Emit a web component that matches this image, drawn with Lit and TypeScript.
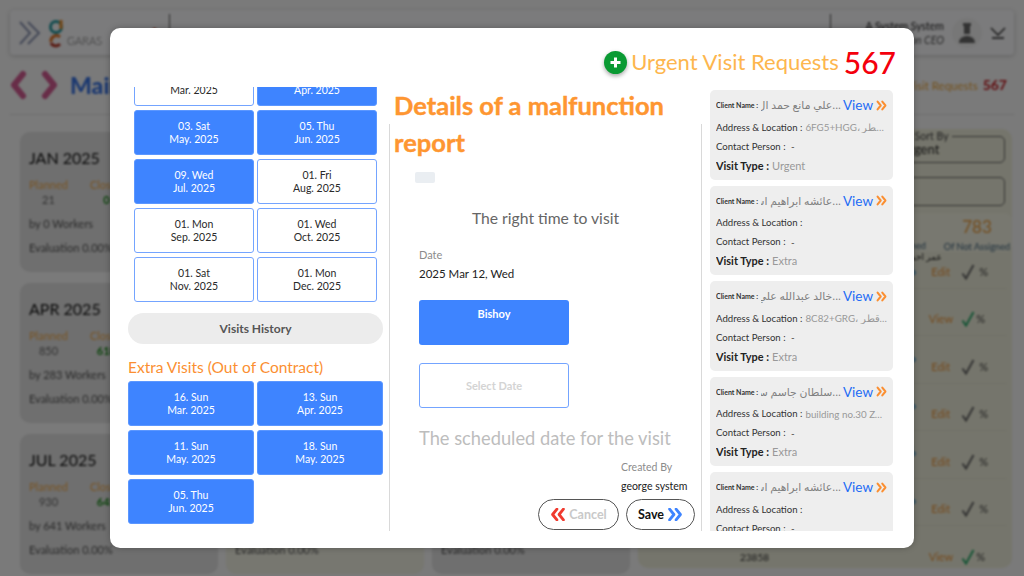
import { LitElement, html, css, svg } from "lit";
import { customElement } from "lit/decorators.js";

const chev = (c: string, left = false) => html`<svg class="chev" viewBox="0 0 14 12" style="color:${c}">
  ${left
    ? svg`<path d="M6 1 2 6l4 5M12 1 8 6l4 5" fill="none" stroke="currentColor" stroke-width="2.6" stroke-linejoin="round" stroke-linecap="round"/>`
    : svg`<path d="M2 1l4 5-4 5M8 1l4 5-4 5" fill="none" stroke="currentColor" stroke-width="2.6" stroke-linejoin="round" stroke-linecap="round"/>`}
</svg>`;

const check = (c: string) => html`<svg class="check" viewBox="0 0 14 16"><path d="M1.5 9.5l3.5 5L12.5 1" fill="none" stroke="${c}" stroke-width="2"/></svg>`;

const months1 = [
  { d: "", m: "Mar. 2025", on: false },
  { d: "", m: "Apr. 2025", on: true },
  { d: "03. Sat", m: "May. 2025", on: true },
  { d: "05. Thu", m: "Jun. 2025", on: true },
  { d: "09. Wed", m: "Jul. 2025", on: true },
  { d: "01. Fri", m: "Aug. 2025", on: false },
  { d: "01. Mon", m: "Sep. 2025", on: false },
  { d: "01. Wed", m: "Oct. 2025", on: false },
  { d: "01. Sat", m: "Nov. 2025", on: false },
  { d: "01. Mon", m: "Dec. 2025", on: false },
];
const extras = [
  { d: "16. Sun", m: "Mar. 2025" },
  { d: "13. Sun", m: "Apr. 2025" },
  { d: "11. Sun", m: "May. 2025" },
  { d: "18. Sun", m: "May. 2025" },
  { d: "05. Thu", m: "Jun. 2025" },
];
const visits = [
  { n: "...علي مانع حمد ال", a: "6FG5+HGG، الدوحة، قطر", t: "Urgent" },
  { n: "...عائشه ابراهيم اس", a: "", t: "Extra" },
  { n: "...خالد عبدالله علي", a: "8C82+GRG، الريان، قطر", t: "Extra" },
  { n: "...سلطان جاسم سا", a: "building no.30 Zone 51 street", t: "Extra" },
  { n: "...عائشه ابراهيم اس", a: "", t: "Extra" },
];
const bgCards = [
  { t: "JAN 2025", p: "21", c: "0", w: "0", y: false },
  { t: "FEB 2025", p: "840", c: "600", w: "280", y: true },
  { t: "MAR 2025", p: "900", c: "620", w: "300", y: false },
  { t: "APR 2025", p: "850", c: "618", w: "283", y: false },
  { t: "MAY 2025", p: "880", c: "630", w: "290", y: true },
  { t: "JUN 2025", p: "910", c: "635", w: "310", y: false },
  { t: "JUL 2025", p: "930", c: "641", w: "641", y: false },
  { t: "AUG 2025", p: "920", c: "640", w: "320", y: true },
  { t: "SEP 2025", p: "890", c: "625", w: "305", y: false },
];
const rows = [false, true, false, false, false, false, true];

@customElement("app-root")
export class AppRoot extends LitElement {
  static styles = css`
    :host { display: block; width: 1024px; height: 576px; overflow: hidden; position: relative; font-family: "Lato", "Noto Sans", "Noto Sans CJK SC", sans-serif; background: #f4f4f4; }
    * { box-sizing: border-box; }

    /* dimmed page */
    .page { width: 1024px; height: 576px; background: #f4f4f4; padding: 10px 10px 0; filter: blur(1px); display: flex; flex-direction: column; overflow: hidden; }
    .topbar { height: 45px; flex: none; display: flex; align-items: center; background: #f6f6f8; border-radius: 4px; box-shadow: 0 1px 4px rgba(0,0,0,.2); padding: 0 8px; }
    .tb-left { width: 152px; display: flex; align-items: center; gap: 6px; border-right: 1px solid #555; height: 38px; }
    .logo { display: flex; align-items: flex-end; gap: 1px; }
    .garas { font-size: 11px; font-weight: 300; color: #666; line-height: 14px; }
    .dot { margin-left: auto; margin-right: 13px; width: 3px; height: 10px; background: #c8401e; }
    .tb-fill { flex: 1; }
    .tb-right { width: 176px; border-left: 1px solid #555; height: 38px; display: flex; align-items: center; justify-content: flex-end; gap: 8px; }
    .who { text-align: right; font-size: 10.5px; line-height: 14px; color: #222; }
    .who i { color: #555; display: block; }
    .avatar { width: 30px; height: 30px; border-radius: 50%; background: #eee; display: flex; align-items: center; justify-content: center; }

    .titlebar { display: flex; align-items: center; height: 60px; flex: none; border-bottom: 1px solid #ddd; }
    .mai { font-size: 23px; font-weight: 900; color: #3a73e0; margin-left: 12px; }
    .tb-space { flex: 1; }
    .urgent-bg { font-size: 11.5px; color: #e8a33a; margin-right: 7px; white-space: nowrap; }
    .urgent-bg b { font-size: 14px; color: #c0161c; font-weight: 700; margin-left: 2px; }

    .main { flex: 1; display: flex; gap: 8px; padding-top: 17px; min-height: 0; padding-left: 10px; }
    .cols { flex: none; width: 610px; display: grid; grid-template-columns: repeat(3, 198px); grid-auto-rows: 140px; gap: 11px 8px; }
    .mcard { background: #dedede; border-radius: 10px; padding: 16px 9px 0; overflow: hidden; }
    .mcard.y { background: #eeeee0; }
    .mcard h3 { margin: 0 0 9px; font-size: 16px; font-weight: 400; color: #111; line-height: 20px; }
    .stats { display: flex; gap: 22px; font-size: 11px; line-height: 15px; text-align: center; }
    .stats .pl { color: #f0a848; }
    .stats .v { color: #666; }
    .stats .g { color: #1b8a1b; font-weight: 700; }
    .mcard p { margin: 10px 0 0; font-size: 11px; line-height: 14px; color: #555; }

    .side { width: 374px; height: 439px; flex: none; margin-top: -3px; background: #ebebd8; border-radius: 10px; padding: 3px 7px 0 12px; display: flex; flex-direction: column; }
    fieldset { margin: 0; padding: 0 0 0 249px; height: 31px; border: 1px solid #666; border-radius: 5px; flex: none; font-size: 13px; line-height: 18px; color: #222; }
    fieldset.e { margin-top: 14px; height: 29px; }
    legend { margin-left: -3px; padding: 0 3px; font-size: 10.5px; line-height: 8px; color: #444; white-space: nowrap; }
    .sbox { flex: none; height: 39px; margin: 7px -7px 0 0; padding-right: 7px; display: flex; justify-content: flex-end; background: #f0f0e0; border-radius: 8px; }
    .sc { display: flex; flex-direction: column; align-items: center; }
    .sc.a { width: 40px; align-items: flex-end; margin-right: 23px; padding-top: 27px; font-size: 9.2px; line-height: 12px; color: #3d6079; }
    .sc.b { width: 56px; }
    .sc b { font-size: 17px; font-weight: 400; line-height: 28px; color: #e89a3a; }
    .sc span { font-size: 9.2px; line-height: 11px; color: #3d6079; white-space: nowrap; }
    .arab { flex: none; height: 5px; font-size: 9px; line-height: 10px; color: #222; padding-left: 256px; white-space: nowrap; font-family: "Noto Sans", "DejaVu Sans", sans-serif; }
    .trow { flex: none; height: 47.4px; display: flex; align-items: flex-end; justify-content: flex-end; gap: 11px; padding: 0 19px 8px 0; border-bottom: 1px solid #e0e0d0; font-size: 11px; line-height: 16px; margin-right: -2px; }
    .trow.first { height: 32px; }
    .trow.last { border-bottom: 0; }
    .trow.vw { padding-right: 22px; gap: 8px; }
    .trow .edit { color: #e8943a; }
    .trow .pct { font-size: 11px; color: #444; margin-left: -7px; }
    .trow .ids { margin-right: auto; margin-left: 90px; font-size: 10px; color: #333; }
    .peo { width: 5px; height: 12px; margin-right: 4px; align-self: center; }
    .check { width: 14px; height: 16px; flex: none; }

    /* overlay */
    .scrim { position: absolute; inset: 0; background: rgba(0,0,0,.5); }
    .modal { position: absolute; left: 110px; top: 28px; width: 804px; height: 520px; background: #fff; border-radius: 10px; box-shadow: 0 0 6px rgba(0,0,0,.25); display: flex; flex-direction: column; overflow: hidden; }
    .mhead { flex: none; height: 59px; display: flex; align-items: center; justify-content: flex-end; padding: 9px 18px 0 0; }
    .plus { width: 23px; height: 23px; border-radius: 50%; background: #0a9a33; box-shadow: 0 2px 4px rgba(0,0,0,.35); display: flex; align-items: center; justify-content: center; margin-right: 4px; }
    .mhead .ttl { font-size: 22px; color: #fdb64e; line-height: 30px; margin-right: 5px; white-space: nowrap; }
    .mhead .num { font-size: 30px; color: #f4000c; line-height: 30px; font-weight: 500; }
    .mbody { flex: 1; display: grid; grid-template-columns: 279px 313px 1fr; min-height: 0; }

    .left { height: 444px; overflow: hidden; padding: 0 0 0 18px; }
    .grid { display: grid; grid-template-columns: 120px 120px; gap: 4px 3px; padding-left: 6px; margin-top: -26px; }
    .day { height: 45px; border-radius: 3px; border: 1.5px solid #74a4ff; background: #fff; color: #2a2a2a; font-size: 10.5px; line-height: 12.6px; display: flex; flex-direction: column; align-items: center; justify-content: center; }
    .day.on { background: #3e84ff; border-color: #5c97ff; color: #fff; }
    .hist { width: 255px; height: 31px; margin-top: 11px; border-radius: 16px; background: #ececec; color: #555; font-size: 12px; font-weight: 700; display: flex; align-items: center; justify-content: center; }
    .xt { color: #fb8f32; font-size: 15.5px; line-height: 20px; margin: 13px 0 4px; }
    .grid2 { display: grid; grid-template-columns: 126px 126px; gap: 4px 3px; }
    .grid2 .day { border-color: #5c97ff; }

    .mid { position: relative; height: 444px; }
    .mid-in { position: absolute; left: 0; right: 0; top: 37px; bottom: 0; border-left: 1.5px solid #d9d9d9; border-right: 1.5px solid #d9d9d9; display: flex; flex-direction: column; overflow: hidden; }
    .h-orange { position: absolute; left: 5px; top: 0; width: 290px; margin: 0; font-size: 25.5px; font-weight: 700; line-height: 37px; color: #fe9631; -webkit-text-stroke: .4px #fe9631; z-index: 1; }
    .chip { width: 20px; height: 11px; margin: 48px 0 0 25px; background: #eaeef2; border-radius: 2px; flex: none; }
    .rt { text-align: center; font-size: 15.7px; line-height: 20px; color: #666; margin-top: 25px; flex: none; }
    .dl { margin: 20px 0 0 29px; font-size: 11px; line-height: 14px; color: #8c8c8c; flex: none; }
    .dv { margin: 4px 0 0 29px; font-size: 11.5px; line-height: 15px; color: #222; flex: none; }
    .btn { margin: 19px 0 0 29px; width: 150px; height: 45px; border-radius: 3px; flex: none; font-size: 11px; font-weight: 700; display: flex; justify-content: center; }
    .btn.on { background: #3e84ff; color: #fff; padding-top: 7px; }
    .btn.off { margin-top: 18px; border: 1.5px solid #74a4ff; background: #fff; color: #d4d4d4; align-items: center; }
    .sch { margin: 18px 0 0 29px; font-size: 18.3px; line-height: 24px; color: #bdbdbd; flex: none; white-space: nowrap; }
    .cb { align-self: flex-end; margin: 10px 13px 0 0; width: 67px; flex: none; font-size: 10.5px; line-height: 14px; color: #8c8c8c; white-space: nowrap; }
    .cb div { margin-top: 5px; color: #222; }
    .acts { align-self: flex-end; display: flex; gap: 7px; margin: 6px 6px 0 0; flex: none; }
    .act { height: 31px; border: 1px solid #555; border-radius: 16px; display: flex; align-items: center; justify-content: center; gap: 3px; font-size: 12.5px; font-weight: 700; background: #fff; }
    .act.c { width: 81px; color: #c9c9c9; }
    .act.s { width: 69px; color: #111; }
    .chev { width: 16px; height: 13px; flex: none; }

    .right { height: 444px; overflow: hidden; padding: 3px 21px 0 8px; display: flex; flex-direction: column; gap: 6px; }
    .vc { flex: none; height: 89.5px; background: #eeeeee; border-radius: 5px; padding: 8px 6px 0 6px; }
    .r { display: flex; align-items: center; white-space: nowrap; overflow: hidden; }
    .r1 { height: 14px; }
    .cn { font-size: 7px; font-weight: 700; color: #333; flex: none; margin-right: 3px; }
    .nm { flex: 1; min-width: 0; overflow: hidden; font-size: 10.8px; color: #808080; text-align: right; direction: rtl; white-space: nowrap; font-family: "Noto Sans", "DejaVu Sans", sans-serif; line-height: 14px; }
    .view { color: #1e6cf5; font-size: 13.5px; flex: none; margin-left: 2px; display: flex; align-items: center; gap: 3px; }
    .view .chev { width: 11px; height: 11px; }
    .r2 { margin-top: 8px; height: 14px; font-size: 9.6px; color: #333; }
    .r3 { margin-top: 5px; height: 14px; font-size: 9.6px; color: #333; }
    .r4 { margin-top: 5px; height: 14px; font-size: 10.9px; font-weight: 700; color: #222; }
    .mut { color: #999; margin-left: 3px; overflow: hidden; text-overflow: ellipsis; font-size: 9.8px; flex: 1; min-width: 0; font-weight: 400; }
    .r3 .mut { color: #444; }
    .r4 .mut { font-size: 11px; }
  `;

  render() {
    return html`
      <div class="page">
        <div class="topbar">
          <div class="tb-left">
            <svg width="24" height="26" viewBox="0 0 24 26"><path d="M2 2l10 11L2 24M10 2l11 11-11 11" fill="none" stroke="#8a93b0" stroke-width="2"/></svg>
            <div class="logo">
              <svg width="18" height="30" viewBox="0 0 18 30">
                <circle cx="8" cy="9" r="5.5" fill="none" stroke="#2b9aa0" stroke-width="3"/>
                <path d="M13 2v9" stroke="#e88d2c" stroke-width="3"/>
                <path d="M3 24a5.5 5.5 0 0 1 9-5" fill="none" stroke="#e0762a" stroke-width="3"/>
                <path d="M3 25a5.5 5.5 0 0 0 9 1" fill="none" stroke="#b53a2a" stroke-width="3"/>
              </svg>
              <span class="garas">GARAS</span>
            </div>
            <span class="dot"></span>
          </div>
          <div class="tb-fill"></div>
          <div class="tb-right">
            <div class="who">A System System<i>on CEO</i></div>
            <div class="avatar"><svg width="18" height="24" viewBox="0 0 18 24"><path d="M5 2h8v3H5zM6 5h6v8H6zM1 22c0-5 4-7 8-7s8 2 8 7z" fill="#666"/></svg></div>
            <svg width="16" height="16" viewBox="0 0 16 16"><path d="M1 3l7 7 7-7M2 13h12" fill="none" stroke="#222" stroke-width="1.3"/></svg>
          </div>
        </div>
        <div class="titlebar">
          <svg width="48" height="30" viewBox="0 0 48 30"><path d="M13 4 4 15l9 11" fill="none" stroke="#d05a90" stroke-width="6" stroke-linecap="round" stroke-linejoin="round"/><path d="M35 4l9 11-9 11" fill="none" stroke="#d05a90" stroke-width="6" stroke-linecap="round" stroke-linejoin="round"/></svg>
          <span class="mai">Main</span>
          <span class="tb-space"></span>
          <span class="urgent-bg">Urgent Visit Requests <b>567</b></span>
        </div>
        <div class="main">
          <div class="cols">
            ${bgCards.map(c => html`<div class="mcard ${c.y ? "y" : ""}">
              <h3>${c.t}</h3>
              <div class="stats"><div><div class="pl">Planned</div><div class="v">${c.p}</div></div><div><div class="pl">Closed</div><div class="g">${c.c}</div></div></div>
              <p>by ${c.w} Workers</p>
              <p>Evaluation 0.00%</p>
            </div>`)}
          </div>
          <div class="side">
            <fieldset><legend>Or Sort By</legend>Urgent</fieldset>
            <fieldset class="e"></fieldset>
            <div class="sbox">
              <div class="sc a">Assigned</div>
              <div class="sc b"><b>783</b><span>Of Not Assigned</span></div>
            </div>
            <div class="arab">عمر احمد</div>
            ${rows.map((isView, i) => html`<div class="trow ${i === 0 ? "first" : ""} ${i === 6 ? "last" : ""} ${isView ? "vw" : ""}">
              ${i === 6 ? html`<span class="ids">23858</span>` : ""}
              ${isView
                ? html`<span class="edit">View</span>${check("#2aa86a")}`
                : html`<svg class="peo" viewBox="0 0 5 12"><path d="M1 1v7M1 8a2 2 0 1 0 3 2 2 2 0 0 0-3-2" fill="none" stroke="#2d8fd0" stroke-width="1.4"/></svg><span class="edit">Edit</span>${check("#666")}`}
              <span class="pct">%</span>
            </div>`)}
          </div>
        </div>
      </div>
      <div class="scrim"></div>
      <div class="modal">
        <div class="mhead">
          <span class="plus"><svg width="13" height="13" viewBox="0 0 13 13"><path d="M6.5 1.5v10M1.5 6.5h10" stroke="#fff" stroke-width="3"/></svg></span>
          <span class="ttl">Urgent Visit Requests</span>
          <span class="num">567</span>
        </div>
        <div class="mbody">
          <div class="left">
            <div class="grid">
              ${months1.map(m => html`<div class="day ${m.on ? "on" : ""}"><span>${m.d || "\u00a0"}</span><span>${m.m}</span></div>`)}
            </div>
            <div class="hist">Visits History</div>
            <div class="xt">Extra Visits (Out of Contract)</div>
            <div class="grid2">
              ${extras.map(m => html`<div class="day on"><span>${m.d}</span><span>${m.m}</span></div>`)}
            </div>
          </div>
          <div class="mid">
            <h2 class="h-orange">Details of a malfunction report</h2>
            <div class="mid-in">
              <div class="chip"></div>
              <div class="rt">The right time to visit</div>
              <div class="dl">Date</div>
              <div class="dv">2025 Mar 12, Wed</div>
              <div class="btn on">Bishoy</div>
              <div class="btn off">Select Date</div>
              <div class="sch">The scheduled date for the visit</div>
              <div class="cb">Created By<div>george system</div></div>
              <div class="acts">
                <div class="act c">${chev("#f03a2e", true)}Cancel</div>
                <div class="act s">Save${chev("#3e84ff")}</div>
              </div>
            </div>
          </div>
          <div class="right">
            ${visits.map(v => html`<div class="vc">
              <div class="r r1"><span class="cn">Client Name :</span><span class="nm">${v.n}</span><span class="view">View${chev("#fb8f32")}</span></div>
              <div class="r r2"><span>Address &amp; Location :</span><span class="mut">${v.a}</span></div>
              <div class="r r3"><span>Contact Person :</span><span class="mut">&nbsp;-</span></div>
              <div class="r r4"><span>Visit Type :</span><span class="mut">${v.t}</span></div>
            </div>`)}
          </div>
        </div>
      </div>
    `;
  }
}
